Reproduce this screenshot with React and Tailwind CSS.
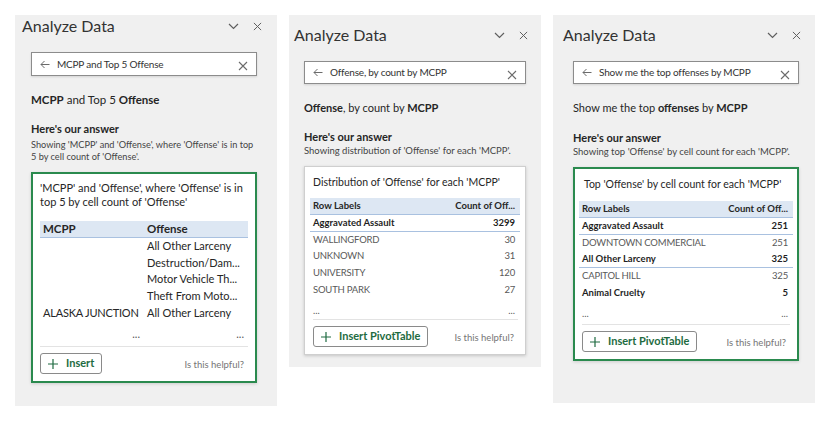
import React from 'react';

const FONT = { fontFamily: 'Lato, "Noto Sans", sans-serif' };

const Chevron = () => (
  <svg width="11" height="7" viewBox="0 0 11 7" fill="none" stroke="#5f5f5f" strokeWidth="1.2">
    <path d="M1 1l4.5 4.5L10 1" />
  </svg>
);

const Close = ({ size = 9, color = '#5f5f5f' }) => (
  <svg width={size} height={size} viewBox="0 0 10 10" fill="none" stroke={color} strokeWidth="1.1">
    <path d="M1 1l8 8M9 1l-8 8" />
  </svg>
);

const BackArrow = () => (
  <svg width="10" height="9" viewBox="0 0 10 9" fill="none" stroke="#6b6b6b" strokeWidth="1">
    <path d="M9.5 4.5H1M4.5 1L1 4.5 4.5 8" />
  </svg>
);

const Plus = () => (
  <svg width="10" height="10" viewBox="0 0 10 10" fill="none" stroke="#1e6b41" strokeWidth="1.2">
    <path d="M5 0v10M0 5h10" />
  </svg>
);

const SearchBox = ({ text, className }) => (
  <div className={`bg-white border border-[#8c8c8c] shadow-[0_1px_2px_rgba(0,0,0,0.12)] flex items-center pl-[8px] pr-[8px] ${className}`}>
    <BackArrow />
    <span className="ml-[7px] text-[10px] tracking-[-0.2px] text-[#333] flex-1">{text}</span>
    <div className="mt-[4px]">
      <Close size={10} color="#6b6b6b" />
    </div>
  </div>
);

const Header = ({ className }) => (
  <div className={`flex items-center ${className}`}>
    <span className="text-[16px] text-[#333] flex-1 leading-[22px]">Analyze Data</span>
    <Chevron />
    <div className="ml-[14px]">
      <Close />
    </div>
  </div>
);

const InsertButton = ({ label }) => (
  <div className="h-[21px] border border-[#8a8a8a] rounded-[3px] flex items-center px-[7px] bg-white">
    <Plus />
    <span className="ml-[8px] text-[11px] font-bold text-[#1e6b41]">{label}</span>
  </div>
);

const Footer = ({ label, className }) => (
  <div className={`mt-auto ${className}`}>
    <div className="h-px bg-[#e3e3e3]" />
    <div className="flex items-center justify-between mt-[6px]">
      <InsertButton label={label} />
      <span className="text-[9.5px] text-[#767676] mr-[4px] mt-[4px]">Is this helpful?</span>
    </div>
  </div>
);

const PivotTable = ({ rows }) => (
  <div className="text-[9.5px] text-[#262626]">
    <div className="h-[17px] bg-[#dde7f3] border-b border-[#a9c1e0] flex items-center justify-between px-[3px] font-bold">
      <span>Row Labels</span>
      <span className="mr-[2px]">Count of Off...</span>
    </div>
    {rows.map((r, i) => (
      <div
        key={i}
        className={`h-[16.6px] flex items-center justify-between px-[3px] ${r.bold ? 'font-bold text-[#1f1f1f]' : 'text-[#595959] tracking-[-0.2px]'} ${r.line ? 'border-b border-[#a9c1e0]' : ''}`}
      >
        <span>{r.label}</span>
        <span className="mr-[2px]">{r.value}</span>
      </div>
    ))}
    <div className="h-[16px] mt-[5px] flex items-center justify-between px-[3px] text-[#595959]">
      <span>...</span>
      <span className="mr-[2px]">...</span>
    </div>
  </div>
);

const firstRows = [
  ['', 'All Other Larceny'],
  ['', 'Destruction/Dam...'],
  ['', 'Motor Vehicle Th...'],
  ['', 'Theft From Moto...'],
  ['ALASKA JUNCTION', 'All Other Larceny'],
];

const secondRows = [
  { label: 'Aggravated Assault', value: '3299', bold: true, line: true },
  { label: 'WALLINGFORD', value: '30' },
  { label: 'UNKNOWN', value: '31' },
  { label: 'UNIVERSITY', value: '120' },
  { label: 'SOUTH PARK', value: '27' },
];

const thirdRows = [
  { label: 'Aggravated Assault', value: '251', bold: true, line: true },
  { label: 'DOWNTOWN COMMERCIAL', value: '251' },
  { label: 'All Other Larceny', value: '325', bold: true, line: true },
  { label: 'CAPITOL HILL', value: '325' },
  { label: 'Animal Cruelty', value: '5', bold: true },
];

export default function App() {
  return (
    <div className="w-[832px] h-[437px] bg-white flex items-start gap-[12px] pl-[15px] pt-[15px] text-[#262626]" style={FONT}>
      {/* Panel 1 */}
      <div className="w-[262px] h-[391px] bg-[#f0f0f0] flex flex-col">
        <Header className="pl-[7px] pr-[15px] h-[22px]" />
        <div className="pl-[16px] pr-[20px]">
          <SearchBox text="MCPP and Top 5 Offense" className="mt-[15px] h-[24px]" />
          <div className="mt-[16px] text-[11.5px] leading-[16px]">
            <b className="font-bold">MCPP</b> and Top 5 <b className="font-bold">Offense</b>
          </div>
          <div className="mt-[13px] text-[11px] leading-[16px] font-bold">Here's our answer</div>
          <div className="mt-[2px] text-[9.2px] leading-[12px] text-[#444]">
            Showing 'MCPP' and 'Offense', where 'Offense' is in top 5 by cell count of 'Offense'.
          </div>
          <div className="mt-[9px] h-[211px] bg-white border-2 border-[#2a8a4e] pt-[7px] pb-[7px] px-[7px] shadow-[0_1px_3px_rgba(0,0,0,0.15)] flex flex-col">
            <div className="text-[11px] leading-[14px]">
              'MCPP' and 'Offense', where 'Offense' is in top 5 by cell count of 'Offense'
            </div>
            <div className="mt-[12px] text-[11px] text-[#262626]">
              <div className="h-[17px] bg-[#dde7f3] border-b border-[#a9c1e0] flex items-center font-bold text-[11.5px]">
                <span className="w-[104px] shrink-0 pl-[3px]">MCPP</span>
                <span className="pl-[3px]">Offense</span>
              </div>
              {firstRows.map(([a, b], i) => (
                <div key={i} className="h-[16.67px] flex items-center whitespace-nowrap">
                  <span className="w-[104px] shrink-0 pl-[3px] tracking-[-0.2px]">{a}</span>
                  <span className="pl-[3px]">{b}</span>
                </div>
              ))}
              <div className="h-[16px] mt-[5px] flex items-center text-[#595959]">
                <span className="w-[104px] shrink-0 text-right pr-[4px]">...</span>
                <span className="flex-1 text-right pr-[4px]">...</span>
              </div>
            </div>
            <Footer label="Insert" />
          </div>
        </div>
      </div>

      {/* Panel 2 */}
      <div className="w-[252px] h-[352px] bg-[#f0f0f0] flex flex-col">
        <Header className="pl-[5px] pr-[13px] mt-[9px] h-[22px]" />
        <div className="pl-[15px] pr-[15px]">
          <SearchBox text="Offense, by count by MCPP" className="mt-[15px] h-[23px]" />
          <div className="mt-[16px] text-[11px] leading-[16px]">
            <b className="font-bold">Offense</b>, by count by <b className="font-bold">MCPP</b>
          </div>
          <div className="mt-[13px] text-[11px] leading-[16px] font-bold">Here's our answer</div>
          <div className="mt-[0px] text-[9.5px] leading-[12px] text-[#444]">
            Showing distribution of 'Offense' for each 'MCPP'.
          </div>
          <div className="mt-[9px] h-[189px] bg-white border border-[#cfcfcf] pt-[8px] pb-[7px] px-[5px] shadow-[0_1px_3px_rgba(0,0,0,0.18)] flex flex-col">
            <div className="text-[10.5px] leading-[14px] pl-[3px]">Distribution of 'Offense' for each 'MCPP'</div>
            <div className="mt-[9px]">
              <PivotTable rows={secondRows} />
            </div>
            <Footer label="Insert PivotTable" className="pl-[3px] pr-[2px]" />
          </div>
        </div>
      </div>

      {/* Panel 3 */}
      <div className="w-[262px] h-[388px] bg-[#f0f0f0] flex flex-col">
        <Header className="pl-[10px] pr-[14px] mt-[9px] h-[22px]" />
        <div className="pl-[20px] pr-[16px]">
          <SearchBox text="Show me the top offenses by MCPP" className="mt-[15px] h-[23px]" />
          <div className="mt-[16px] text-[11px] leading-[16px]">
            Show me the top <b className="font-bold">offenses</b> by <b className="font-bold">MCPP</b>
          </div>
          <div className="mt-[14px] text-[11px] leading-[16px] font-bold">Here's our answer</div>
          <div className="mt-[0px] text-[9.5px] leading-[12px] text-[#444]">
            Showing top 'Offense' by cell count for each 'MCPP'.
          </div>
          <div className="mt-[9px] h-[194px] bg-white border-2 border-[#2a8a4e] pt-[8px] pb-[7px] px-[4px] shadow-[0_1px_3px_rgba(0,0,0,0.15)] flex flex-col">
            <div className="text-[10.5px] leading-[14px] pl-[5px]">Top 'Offense' by cell count for each 'MCPP'</div>
            <div className="mt-[10px]">
              <PivotTable rows={thirdRows} />
            </div>
            <Footer label="Insert PivotTable" className="pl-[3px] pr-[3px]" />
          </div>
        </div>
      </div>
    </div>
  );
}
